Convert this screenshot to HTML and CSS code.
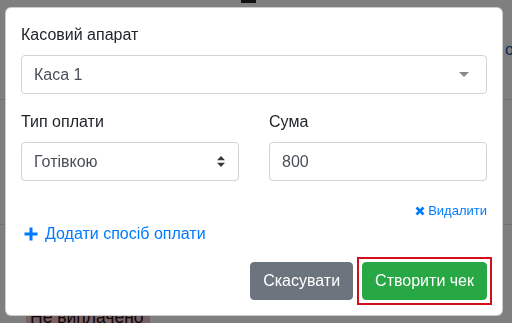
FILE: index.html
```html
<!DOCTYPE html>
<html>
<head>
	<meta charset="utf8">
	<meta name="viewport" content="width=device-width">
	<title>Створити чек</title>
	<link rel="stylesheet" href="styles.css">
</head>
<body>
	<div class="page">
		<div class="page-tab"></div>
		<a class="page-link" href="#">оплата</a>
		<div class="page-rule"></div>
		<div class="page-rule lower"></div>
		<span class="badge-unpaid">Не виплачено</span>
	</div>

	<div class="backdrop"></div>

	<div class="modal">
		<form class="modal-body">
			<div class="form-group">
				<label class="form-label">Касовий апарат</label>
				<div class="control select-box">
					<span>Каса 1</span>
					<svg class="caret" width="10" height="5" viewBox="0 0 10 5"><path d="M0 0h10L5 5z" fill="#888"/></svg>
				</div>
			</div>

			<div class="form-row">
				<div class="form-col">
					<label class="form-label">Тип оплати</label>
					<div class="control select-box">
						<span>Готівкою</span>
						<svg class="updown" width="8" height="11" viewBox="0 0 8 11"><path d="M4 0l4 4.2H0zM4 11L0 6.8h8z" fill="#343a40"/></svg>
					</div>
				</div>
				<div class="form-col">
					<label class="form-label">Сума</label>
					<input class="control" type="text" value="800">
				</div>
			</div>

			<div class="remove-row">
				<a class="remove-link" href="#">
					<svg width="10" height="10" viewBox="0 0 10 10"><path d="M1.5 1.5l7 7M8.5 1.5l-7 7" stroke="#007bff" stroke-width="2.6"/></svg>
					Видалити
				</a>
			</div>

			<a class="add-link" href="#">
				<svg width="14" height="14" viewBox="0 0 14 14"><path d="M7 0.5v13M0.5 7h13" stroke="#007bff" stroke-width="3"/></svg>
				Додати спосіб оплати
			</a>
		</form>

		<div class="modal-footer">
			<button class="btn btn-secondary" type="button">Скасувати</button>
			<span class="highlight-frame">
				<button class="btn btn-success" type="button">Створити чек</button>
			</span>
		</div>
	</div>
</body>
</html>
```

FILE: styles.css
```css
html, body {
	margin: 0;
	padding: 0;
	font-family: "Liberation Sans", Arial, sans-serif;
	font-size: 16px;
	line-height: 24px;
	color: #212529;
	background: #fff;
}

/* The page behind the dialog. */
.page {
	height: 323px;
	display: flex;
	flex-direction: column;
	align-items: flex-start;
	overflow: hidden;
	white-space: nowrap;
}
.page-tab {
	width: 15px;
	height: 3px;
	margin-left: 241px;
	background: #222;
}
.page-link {
	margin: 35px 0 0 505px;
	color: #0056b3;
	text-decoration: none;
}
.page-rule {
	align-self: stretch;
	height: 1px;
	margin-top: 37px;
	background: #dee2e6;
}
.page-rule.lower {
	margin-top: 124px;
}
.badge-unpaid {
	margin: auto 0 -4px 26px;
	padding: 0 6px 0 4px;
	font-size: 17.5px;
	line-height: 20px;
	color: #1e0b0d;
	background: #f0c2c7;
}

.backdrop {
	position: fixed;
	inset: 0;
	background: rgba(0, 0, 0, 0.5);
}

/* Dialog */
.modal {
	position: absolute;
	left: 5px;
	top: 7px;
	width: 498px;
	box-sizing: border-box;
	background: #fff;
	border: 1px solid rgba(0, 0, 0, 0.2);
	border-radius: 6px;
}
.modal-body {
	margin: 0;
	padding: 15px 15px 1px;
}
.form-group {
	margin-bottom: 16px;
}
.form-label {
	display: block;
	margin-bottom: 8px;
}
.form-row {
	display: grid;
	grid-template-columns: 1fr 1fr;
	column-gap: 30px;
}
.control {
	display: flex;
	align-items: center;
	justify-content: space-between;
	width: 100%;
	height: 39px;
	box-sizing: border-box;
	margin: 0;
	padding: 0 12px;
	font: inherit;
	color: #495057;
	background: #fff;
	border: 1px solid #ced4da;
	border-radius: 4px;
	outline: none;
}
.caret {
	margin-right: 5px;
}
.updown {
	margin-right: 1px;
}

.remove-row {
	display: flex;
	justify-content: flex-end;
	margin-top: 20px;
}
.remove-link {
	display: flex;
	align-items: center;
	gap: 3px;
	font-size: 13px;
	line-height: 19px;
	color: #007bff;
	text-decoration: none;
}
.add-link {
	display: flex;
	align-items: center;
	gap: 7px;
	margin-top: 2px;
	padding-left: 3px;
	color: #007bff;
	text-decoration: none;
}

.modal-footer {
	display: flex;
	justify-content: flex-end;
	align-items: center;
	gap: 9px;
	padding: 15px;
}
.btn {
	display: block;
	height: 38px;
	padding: 0 12px;
	font: inherit;
	color: #fff;
	border: 1px solid transparent;
	border-radius: 4px;
}
.btn-secondary {
	background: #6c757d;
	border-color: #6c757d;
}
.btn-success {
	background: #28a745;
	border-color: #28a745;
}
/* red box drawn around the main action */
.highlight-frame {
	margin: -5px;
	padding: 3px;
	border: 2px solid #d40f1c;
}
```
